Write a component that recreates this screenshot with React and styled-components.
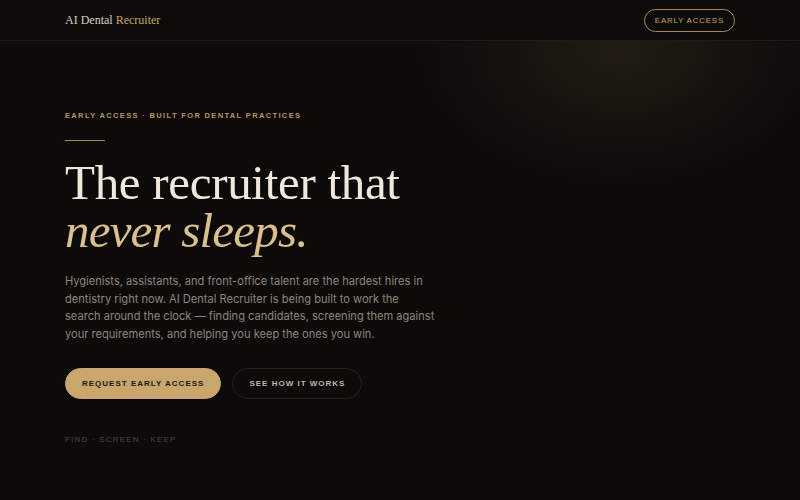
import React from "react";
import styled, { createGlobalStyle } from "styled-components";

const GlobalStyle = createGlobalStyle`
  html, body { margin: 0; padding: 0; background: #0c0b0a; }
  body { font-family: "Inter", "Liberation Sans", sans-serif; }
  * { box-sizing: border-box; }
`;

const Page = styled.div`
  width: 800px;
  height: 500px;
  overflow: hidden;
  background:
    radial-gradient(ellipse 300px 200px at 620px 50px, rgba(60, 48, 30, 0.45), transparent 70%),
    #0c0b0a;
`;

const Nav = styled.header`
  height: 41px;
  display: flex;
  align-items: center;
  justify-content: space-between;
  padding: 0 65px;
  border-bottom: 1px solid #1f1c18;
  background: #0d0c0b;
`;

const Logo = styled.div`
  font-family: "Liberation Serif", serif;
  font-size: 12px;
  color: #d8d2c6;
  span { color: #c6a266; }
`;

const NavButton = styled.button`
  height: 23px;
  padding: 0 10px;
  border-radius: 12px;
  border: 1px solid #a88850;
  background: transparent;
  color: #c4a06a;
  font-family: "Liberation Sans", sans-serif;
  font-size: 8px;
  letter-spacing: 0.75px;
`;

const Hero = styled.main`
  padding: 70px 65px 0;
  display: flex;
  flex-direction: column;
  align-items: flex-start;
`;

const Eyebrow = styled.div`
  font-family: "Liberation Sans", sans-serif;
  font-weight: 700;
  font-size: 7.5px;
  letter-spacing: 1.35px;
  color: #b8955a;
`;

const Rule = styled.div`
  width: 40px;
  height: 1px;
  background: #a88850;
  margin-top: 20px;
`;

const Title = styled.h1`
  margin: 17px 0 0;
  font-family: "Liberation Serif", serif;
  font-weight: 400;
  font-size: 49px;
  line-height: 49px;
  letter-spacing: -0.3px;
  color: #efe9dc;
  em {
    display: block;
    margin-top: -1px;
    color: #dcc08c;
    font-style: italic;
    letter-spacing: -0.8px;
  }
`;

const Lead = styled.p`
  margin: 18px 0 0;
  width: 420px;
  font-family: "Inter", sans-serif;
  font-size: 11.1px;
  line-height: 17.5px;
  color: #8c867b;
`;

const Actions = styled.div`
  display: flex;
  gap: 11px;
  margin-top: 25px;
`;

const Button = styled.button`
  height: 31px;
  padding: 0 16px;
  border-radius: 16px;
  border: 1px solid ${p => (p.primary ? "#c9a66b" : "#24211d")};
  background: ${p => (p.primary ? "#c9a66b" : "transparent")};
  color: ${p => (p.primary ? "#1b1610" : "#bdb6a8")};
  font-family: "Liberation Sans", sans-serif;
  font-weight: 700;
  font-size: 8px;
  letter-spacing: 1px;
`;

const Tagline = styled.div`
  margin-top: 36px;
  font-family: "Liberation Sans", sans-serif;
  font-size: 8px;
  letter-spacing: 1.2px;
  color: #4d4841;
`;

export default function App() {
  return (
    <Page>
      <GlobalStyle />
      <Nav>
        <Logo>
          AI Dental <span>Recruiter</span>
        </Logo>
        <NavButton>EARLY ACCESS</NavButton>
      </Nav>
      <Hero>
        <Eyebrow>EARLY ACCESS · BUILT FOR DENTAL PRACTICES</Eyebrow>
        <Rule />
        <Title>
          The recruiter that
          <em>never sleeps.</em>
        </Title>
        <Lead>
          Hygienists, assistants, and front-office talent are the hardest hires in
          <br />
          dentistry right now. AI Dental Recruiter is being built to work the
          <br />
          search around the clock — finding candidates, screening them against
          <br />
          your requirements, and helping you keep the ones you win.
        </Lead>
        <Actions>
          <Button primary>REQUEST EARLY ACCESS</Button>
          <Button>SEE HOW IT WORKS</Button>
        </Actions>
        <Tagline>FIND · SCREEN · KEEP</Tagline>
      </Hero>
    </Page>
  );
}
